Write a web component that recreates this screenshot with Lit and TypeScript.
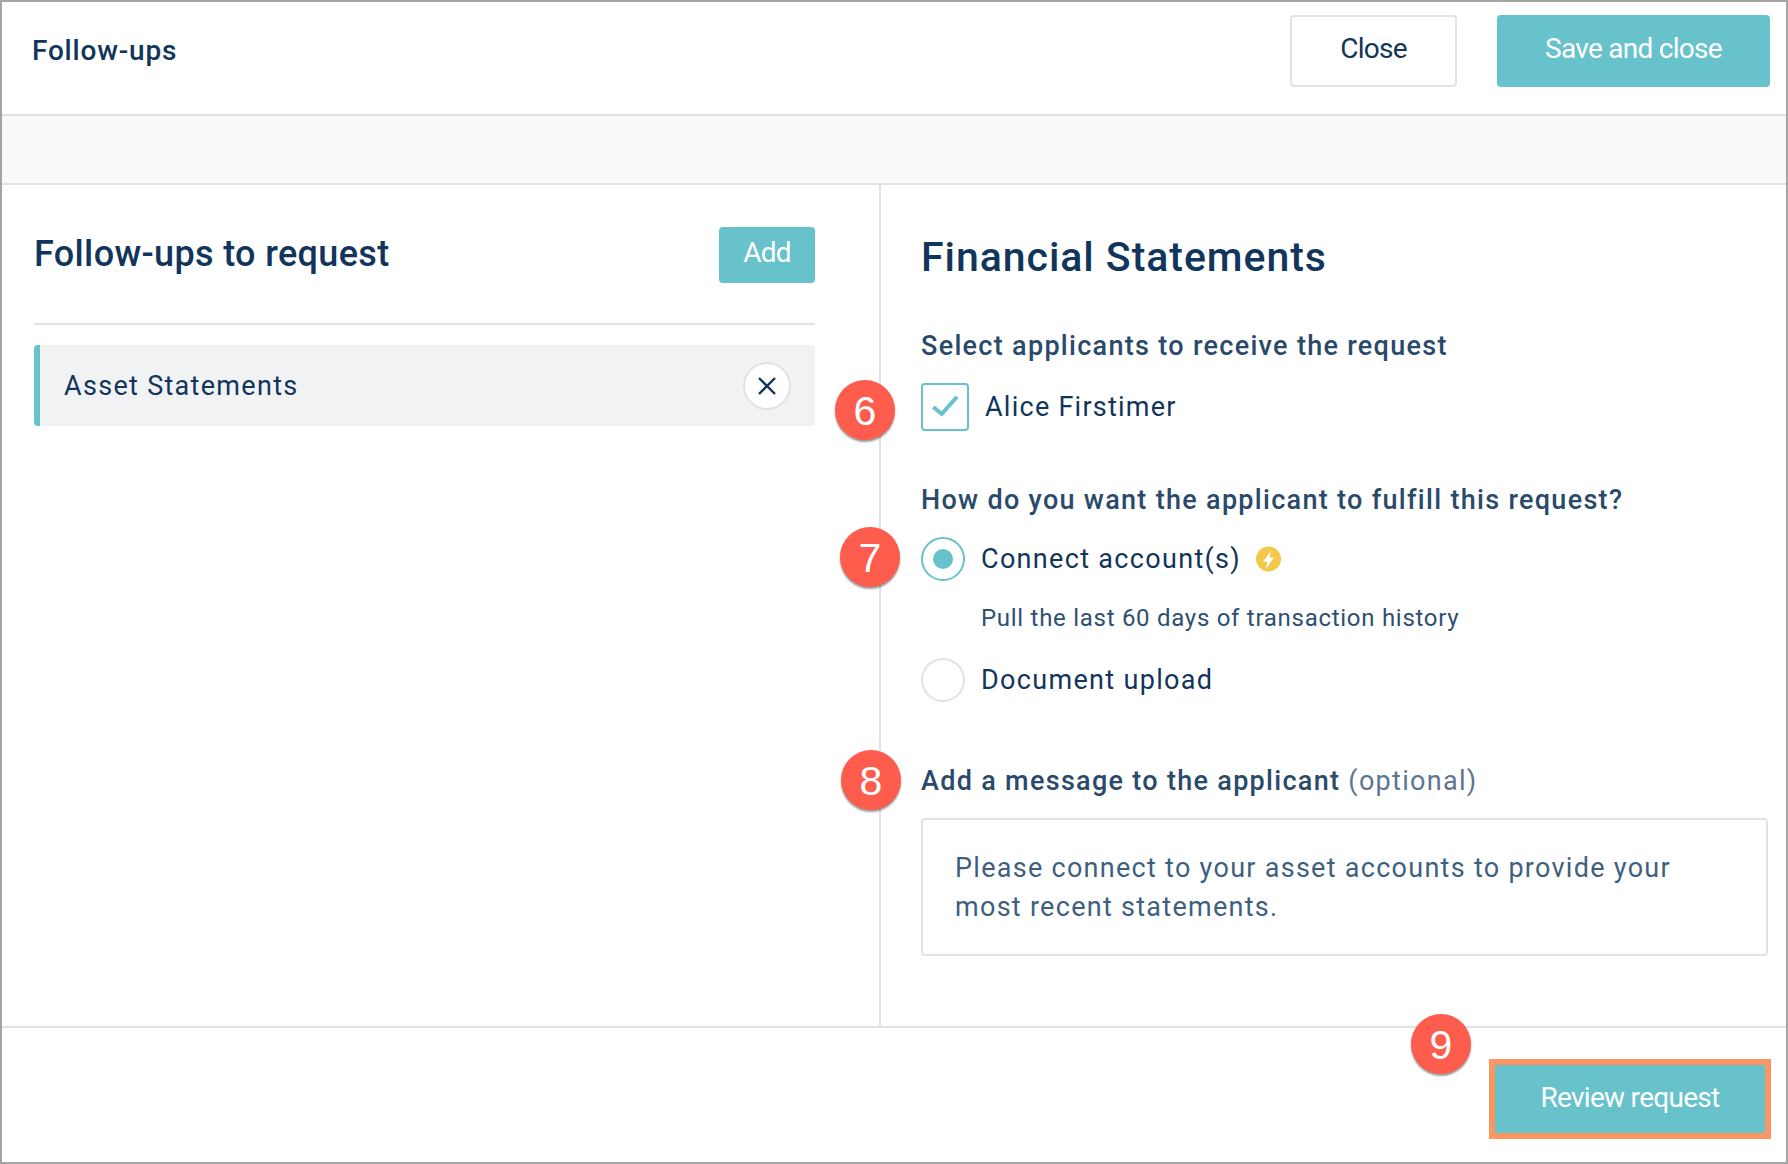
import { LitElement, html, css } from "lit";
import { customElement } from "lit/decorators.js";

@customElement("app-root")
export class AppRoot extends LitElement {
  static styles = css`
    :host {
      display: block;
      position: relative;
      width: 1788px;
      height: 1164px;
      box-sizing: border-box;
      border: 2px solid #a4a4a4;
      font-family: Roboto, sans-serif;
      color: #12355b;
      background: #fff;
      overflow: hidden;
    }
    * { box-sizing: border-box; }
    .header {
      height: 114px;
      display: flex;
      align-items: flex-start;
      padding: 13px 16px 0 30px;
      border-bottom: 2px solid #dfe3e8;
    }
    .page-title {
      font-size: 28px;
      font-weight: 500;
      letter-spacing: 0.8px;
      line-height: 34px;
      margin: 19px auto 0 0;
    }
    .btn {
      display: flex;
      align-items: center;
      justify-content: center;
      font-size: 28px;
      letter-spacing: -0.72px;
      padding-bottom: 6px;
      border-radius: 4px;
      white-space: nowrap;
    }
    .btn-close {
      width: 167px;
      height: 72px;
      border: 2px solid #dfe3e8;
      margin-right: 40px;
      color: #12355b;
    }
    .btn-save {
      width: 273px;
      height: 72px;
      background: #67c2cb;
      color: #fff;
    }
    .band {
      height: 69px;
      background: #f9f9f9;
      border-bottom: 2px solid #dfe3e8;
    }
    .main {
      height: 841px;
      display: grid;
      grid-template-columns: 879px 1fr;
    }
    .left {
      border-right: 2px solid #dfe3e8;
      padding: 42px 64px 0 32px;
    }
    .left-head {
      display: flex;
      justify-content: space-between;
      align-items: flex-start;
      padding-bottom: 40px;
      border-bottom: 2px solid #dfe3e8;
    }
    .left-title {
      font-size: 36px;
      font-weight: 500;
      line-height: 52px;
      letter-spacing: 0.35px;
      padding-top: 1px;
    }
    .btn-add {
      width: 96px;
      height: 56px;
      background: #67c2cb;
      color: #fff;
    }
    .item {
      margin-top: 20px;
      height: 81px;
      background: #f1f2f4;
      border-left: 6px solid #67c2cb;
      border-radius: 4px;
      display: flex;
      align-items: center;
      justify-content: space-between;
      padding: 0 24px 0 24px;
      font-size: 27px;
      letter-spacing: 1.3px;
    }
    .remove {
      width: 48px;
      height: 48px;
      border-radius: 50%;
      background: #fff;
      border: 2px solid #dfe3e8;
      display: flex;
      align-items: center;
      justify-content: center;
    }
    .right {
      padding: 48px 18px 0 40px;
    }
    h2 {
      margin: 0 0 49px;
      font-size: 41px;
      font-weight: 500;
      line-height: 48px;
      letter-spacing: 0.95px;
    }
    .label {
      font-size: 27px;
      font-weight: 500;
      line-height: 32px;
      letter-spacing: 1.3px;
      color: #2a4a6b;
    }
    .optional {
      font-weight: 400;
      color: #5d7590;
    }
    .check-row {
      display: flex;
      align-items: center;
      gap: 16px;
      margin: 21px 0 53px;
      font-size: 27px;
      letter-spacing: 1.25px;
    }
    .checkbox {
      width: 48px;
      height: 48px;
      border: 2px solid #67c2cb;
      border-radius: 4px;
      display: block;
    }
    .radio-row {
      display: flex;
      align-items: center;
      gap: 16px;
      font-size: 27px;
      letter-spacing: 1.32px;
    }
    .first { margin-top: 21px; }
    .second { margin-top: 24px; margin-bottom: 63px; }
    .radio {
      width: 44px;
      height: 44px;
      border-radius: 50%;
      border: 2px solid #dfe3e8;
      display: flex;
      align-items: center;
      justify-content: center;
      flex: none;
    }
    .radio.on { border-color: #67c2cb; }
    .dot {
      width: 20px;
      height: 20px;
      border-radius: 50%;
      background: #67c2cb;
    }
    .bolt {
      display: block;
      margin-left: -1px;
    }
    .sub {
      margin: 21px 0 0 60px;
      font-size: 24px;
      line-height: 32px;
      letter-spacing: 0.72px;
      color: #2f4f72;
    }
    .message {
      margin-top: 21px;
      height: 138px;
      border: 2px solid #dfe3e8;
      border-radius: 4px;
      padding: 29px 32px 0;
      font-size: 27px;
      line-height: 39px;
      letter-spacing: 1.28px;
      color: #3f5f7f;
    }
    .footer {
      border-top: 2px solid #dfe3e8;
      display: flex;
      justify-content: flex-end;
      padding: 31px 15px 0 0;
    }
    .btn-review {
      width: 282px;
      height: 80px;
      padding-bottom: 3px;
      background: #67c2cb;
      border: 6px solid #fb9562;
      border-radius: 0;
      color: #fff;
    }
    .badge {
      position: absolute;
      width: 60px;
      height: 60px;
      border-radius: 50%;
      background: #fe5c4d;
      color: #fff;
      font-family: "Liberation Sans", Arial, sans-serif;
      font-size: 41px;
      line-height: 62px;
      text-align: center;
      box-shadow: 0 2px 2px rgba(0, 0, 0, 0.4);
    }
    .b6 { left: 833px; top: 378px; }
    .b7 { left: 838px; top: 525px; }
    .b8 { left: 839px; top: 748px; }
    .b9 { left: 1409px; top: 1012px; }
  `;

  render() {
    return html`
      <div class="header">
        <div class="page-title">Follow-ups</div>
        <div class="btn btn-close">Close</div>
        <div class="btn btn-save">Save and close</div>
      </div>
      <div class="band"></div>
      <div class="main">
        <div class="left">
          <div class="left-head">
            <div class="left-title">Follow-ups to request</div>
            <div class="btn btn-add">Add</div>
          </div>
          <div class="item">
            <span>Asset Statements</span>
            <div class="remove">
              <svg width="20" height="20" viewBox="0 0 20 20" fill="none" stroke="#12355b" stroke-width="2.4">
                <path d="M2 2 L18 18 M18 2 L2 18" />
              </svg>
            </div>
          </div>
        </div>
        <div class="right">
          <h2>Financial Statements</h2>
          <div class="label">Select applicants to receive the request</div>
          <div class="check-row">
            <svg class="checkbox" viewBox="0 0 44 44" fill="none" stroke="#67c2cb" stroke-width="4">
              <path d="M10.3 22 L18.7 29 L34 11.7" />
            </svg>
            <span>Alice Firstimer</span>
          </div>
          <div class="label">How do you want the applicant to fulfill this request?</div>
          <div class="radio-row first">
            <div class="radio on"><div class="dot"></div></div>
            <span>Connect account(s)</span>
            <svg class="bolt" width="25" height="26" viewBox="0 0 25 26">
              <circle cx="12.5" cy="13" r="12.5" fill="#f3c74a" />
              <path d="M15 4.5 L7.2 15.8 H11.3 L9.8 23.2 L17.8 11.6 H13.6 Z" fill="#fff" />
            </svg>
          </div>
          <div class="sub">Pull the last 60 days of transaction history</div>
          <div class="radio-row second">
            <div class="radio"></div>
            <span>Document upload</span>
          </div>
          <div class="label">Add a message to the applicant <span class="optional">(optional)</span></div>
          <div class="message">Please connect to your asset accounts to provide your<br />most recent statements.</div>
        </div>
      </div>
      <div class="footer">
        <div class="btn btn-review">Review request</div>
      </div>
      <div class="badge b6">6</div>
      <div class="badge b7">7</div>
      <div class="badge b8">8</div>
      <div class="badge b9">9</div>
    `;
  }
}
